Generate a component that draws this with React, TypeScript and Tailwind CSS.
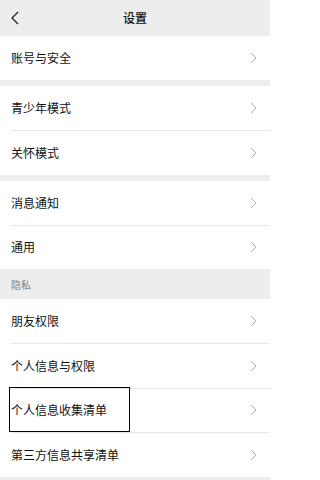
import React from 'react';

const font = { fontFamily: '"Noto Sans CJK SC", "Noto Sans", sans-serif' };

// Chevron on the right of each row
const Arrow = () => (
  <svg width="7" height="12" viewBox="0 0 7 12" fill="none" className="shrink-0">
    <path d="M1 1l5 5-5 5" stroke="#b0b0b0" strokeWidth="1" />
  </svg>
);

const Row = ({ label, first, boxed }: { label: string; first?: boolean; boxed?: boolean }) => (
  <div className="relative bg-white">
    {!first && <div className="ml-[11px] h-[0.5px] bg-[#e9e9e9]" />}
    <div className="flex h-[44px] items-center justify-between pl-[11px] pr-[13px]">
      <span className="text-[12px] text-[#111111]">{label}</span>
      <Arrow />
    </div>
    {boxed && <div className="absolute bottom-0 left-[9px] h-[45px] w-[121px] border border-black" />}
  </div>
);

const Gap = () => <div className="h-[6px] bg-[#ededed]" />;

export default function App() {
  return (
    <div className="flex h-[480px] w-[270px] flex-col overflow-hidden bg-[#ededed]" style={font}>
      <div className="relative flex h-[36px] shrink-0 items-center justify-center">
        <svg width="8" height="14" viewBox="0 0 8 14" fill="none" className="absolute left-[11px] top-[11px]">
          <path d="M7 1L1 7l6 6" stroke="#1a1a1a" strokeWidth="1.2" />
        </svg>
        <span className="text-[12px] font-medium text-[#111111]">设置</span>
      </div>

      <Row label="账号与安全" first />
      <Gap />
      <Row label="青少年模式" first />
      <Row label="关怀模式" />
      <Gap />
      <Row label="消息通知" first />
      <Row label="通用" />

      <div className="flex h-[30px] shrink-0 items-center pl-[11px] text-[10px] text-[#7f7f7f]">隐私</div>

      <Row label="朋友权限" first />
      <Row label="个人信息与权限" />
      <Row label="个人信息收集清单" boxed />
      <Row label="第三方信息共享清单" />
    </div>
  );
}
